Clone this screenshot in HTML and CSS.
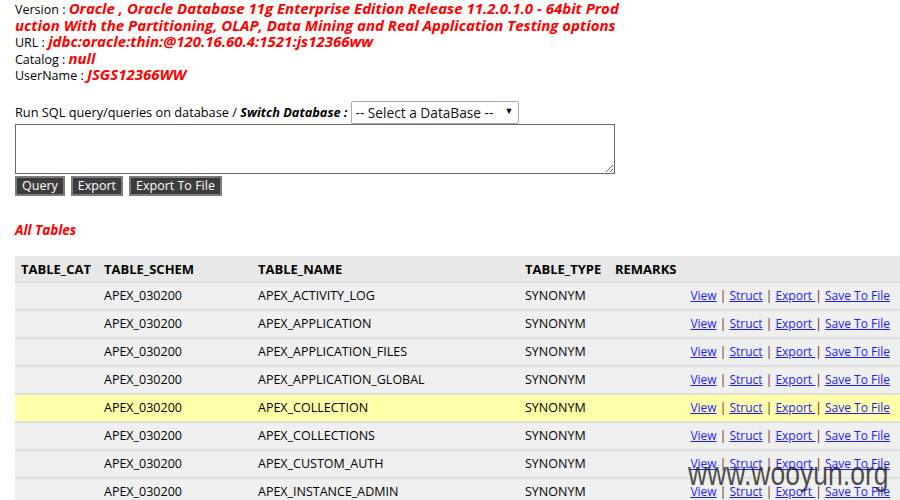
FILE: index.html
```html
<!DOCTYPE html>
<html>
<head>
<meta charset="utf-8">
<link rel="stylesheet" href="styles.css">
</head>
<body>
<div class="page">
  <div class="info">
    <div class="line"><span class="lbl">Version : </span><span class="val">Oracle , Oracle Database 11g Enterprise Edition Release 11.2.0.1.0 - 64bit Prod<br>uction With the Partitioning, OLAP, Data Mining and Real Application Testing options</span></div>
    <div class="line"><span class="lbl">URL : </span><span class="val">jdbc:oracle:thin:@120.16.60.4:1521:js12366ww</span></div>
    <div class="line"><span class="lbl">Catalog : </span><span class="val">null</span></div>
    <div class="line"><span class="lbl">UserName : </span><span class="val">JSGS12366WW</span></div>
  </div>

  <form class="query">
    <div class="qhead">
      <span>Run SQL query/queries on database / <b class="sw">Switch Database :</b></span>
      <div class="select"><span>-- Select a DataBase --</span><span class="arrow">&#9660;</span></div>
    </div>
    <textarea class="sql"></textarea>
    <div class="btns">
      <button type="button" class="btn">Query</button>
      <button type="button" class="btn">Export</button>
      <button type="button" class="btn">Export To File</button>
    </div>
  </form>

  <div class="title">All Tables</div>

  <table class="tables">
    <colgroup>
      <col class="c1"><col class="c2"><col class="c3"><col class="c4"><col class="c5"><col class="c6">
    </colgroup>
    <thead>
      <tr><th>TABLE_CAT</th><th>TABLE_SCHEM</th><th>TABLE_NAME</th><th>TABLE_TYPE</th><th>REMARKS</th><th></th></tr>
    </thead>
    <tbody>
      <tr><td></td><td>APEX_030200</td><td>APEX_ACTIVITY_LOG</td><td>SYNONYM</td><td></td><td class="act"><a href="#">View</a> | <a href="#">Struct</a> | <a href="#">Export </a>| <a href="#">Save To File</a></td></tr>
      <tr><td></td><td>APEX_030200</td><td>APEX_APPLICATION</td><td>SYNONYM</td><td></td><td class="act"><a href="#">View</a> | <a href="#">Struct</a> | <a href="#">Export </a>| <a href="#">Save To File</a></td></tr>
      <tr><td></td><td>APEX_030200</td><td>APEX_APPLICATION_FILES</td><td>SYNONYM</td><td></td><td class="act"><a href="#">View</a> | <a href="#">Struct</a> | <a href="#">Export </a>| <a href="#">Save To File</a></td></tr>
      <tr><td></td><td>APEX_030200</td><td>APEX_APPLICATION_GLOBAL</td><td>SYNONYM</td><td></td><td class="act"><a href="#">View</a> | <a href="#">Struct</a> | <a href="#">Export </a>| <a href="#">Save To File</a></td></tr>
      <tr class="hl"><td></td><td>APEX_030200</td><td>APEX_COLLECTION</td><td>SYNONYM</td><td></td><td class="act"><a href="#">View</a> | <a href="#">Struct</a> | <a href="#">Export </a>| <a href="#">Save To File</a></td></tr>
      <tr><td></td><td>APEX_030200</td><td>APEX_COLLECTIONS</td><td>SYNONYM</td><td></td><td class="act"><a href="#">View</a> | <a href="#">Struct</a> | <a href="#">Export </a>| <a href="#">Save To File</a></td></tr>
      <tr><td></td><td>APEX_030200</td><td>APEX_CUSTOM_AUTH</td><td>SYNONYM</td><td></td><td class="act"><a href="#">View</a> | <a href="#">Struct</a> | <a href="#">Export </a>| <a href="#">Save To File</a></td></tr>
      <tr><td></td><td>APEX_030200</td><td>APEX_INSTANCE_ADMIN</td><td>SYNONYM</td><td></td><td class="act"><a href="#">View</a> | <a href="#">Struct</a> | <a href="#">Export </a>| <a href="#">Save To File</a></td></tr>
    </tbody>
  </table>
</div>
<div class="watermark">www.wooyun.org</div>
</body>
</html>
```

FILE: styles.css
```css
html, body {
  margin: 0;
  padding: 0;
  background: #fff;
  overflow: hidden;
}
body {
  font-family: "Open Sans", "Noto Sans", sans-serif;
  font-size: 12.75px;
  color: #000;
}
.page {
  padding: 1px 0 0 15px;
}
.info .line {
  white-space: nowrap;
  line-height: 16.5px;
}
.lbl {
  font-size: 12.5px;
  line-height: 12px;
}
.val {
  color: #ff0000;
  font-weight: bold;
  font-style: italic;
  font-size: 15px;
  line-height: 12px;
}
.query {
  margin: 17px 0 0 0;
}
.qhead {
  display: flex;
  align-items: center;
  gap: 3px;
  height: 23px;
}
.sw {
  font-style: italic;
}
.select {
  box-sizing: border-box;
  width: 168px;
  height: 23px;
  border: 1px solid #a9a9a9;
  border-radius: 2px;
  display: flex;
  align-items: center;
  justify-content: space-between;
  padding: 0 4px 0 4px;
  font-size: 13.7px;
  color: #111;
}
.arrow {
  font-size: 9px;
  margin-top: -4px;
}
.sql {
  display: block;
  box-sizing: border-box;
  width: 600px;
  height: 50px;
  margin: 0;
  border: 1px solid #6b6b6b;
  resize: both;
}
.btns {
  display: flex;
  gap: 6px;
  margin-top: 2px;
}
.btn {
  box-sizing: border-box;
  height: 20px;
  padding: 0 5px;
  background: #3c3c3c;
  color: #fff;
  border: 2px solid #7c7c7c;
  font-family: "Open Sans", "Noto Sans", sans-serif;
  font-size: 12.5px;
  line-height: 16px;
  cursor: pointer;
}
.title {
  margin-top: 26px;
  color: #ff0000;
  font-weight: bold;
  font-style: italic;
  font-size: 13.5px;
  line-height: 16px;
}
.tables {
  margin-top: 18px;
  width: 885px;
  border-collapse: collapse;
  table-layout: fixed;
}
.c1 { width: 83px; }
.c2 { width: 154px; }
.c3 { width: 267px; }
.c4 { width: 90px; }
.c5 { width: 60px; }
.c6 { width: auto; }
.tables th {
  background: #e8e8e8;
  text-align: left;
  font-weight: bold;
  font-size: 13px;
  height: 26px;
  padding: 0 6px;
  border-bottom: 1px solid #dcdcdc;
  white-space: nowrap;
}
.tables td {
  background: #f0f0f0;
  height: 26px;
  padding: 0 6px;
  font-size: 12.5px;
  border-bottom: 2px solid #e0e0e0;
  white-space: nowrap;
}
.tables tr.hl td {
  background: #ffffaa;
}
.tables td.act {
  text-align: right;
  padding-right: 10px;
  font-size: 12px;
  color: #5a1a1a;
}
.act a {
  color: #1a1aff;
  text-decoration: underline;
}
.watermark {
  position: absolute;
  left: 688px;
  top: 454px;
  font-family: "Liberation Sans", Arial, sans-serif;
  font-size: 34px;
  color: rgba(40, 40, 40, 0.82);
  transform: scaleX(0.78);
  transform-origin: left top;
  white-space: nowrap;
}
```
